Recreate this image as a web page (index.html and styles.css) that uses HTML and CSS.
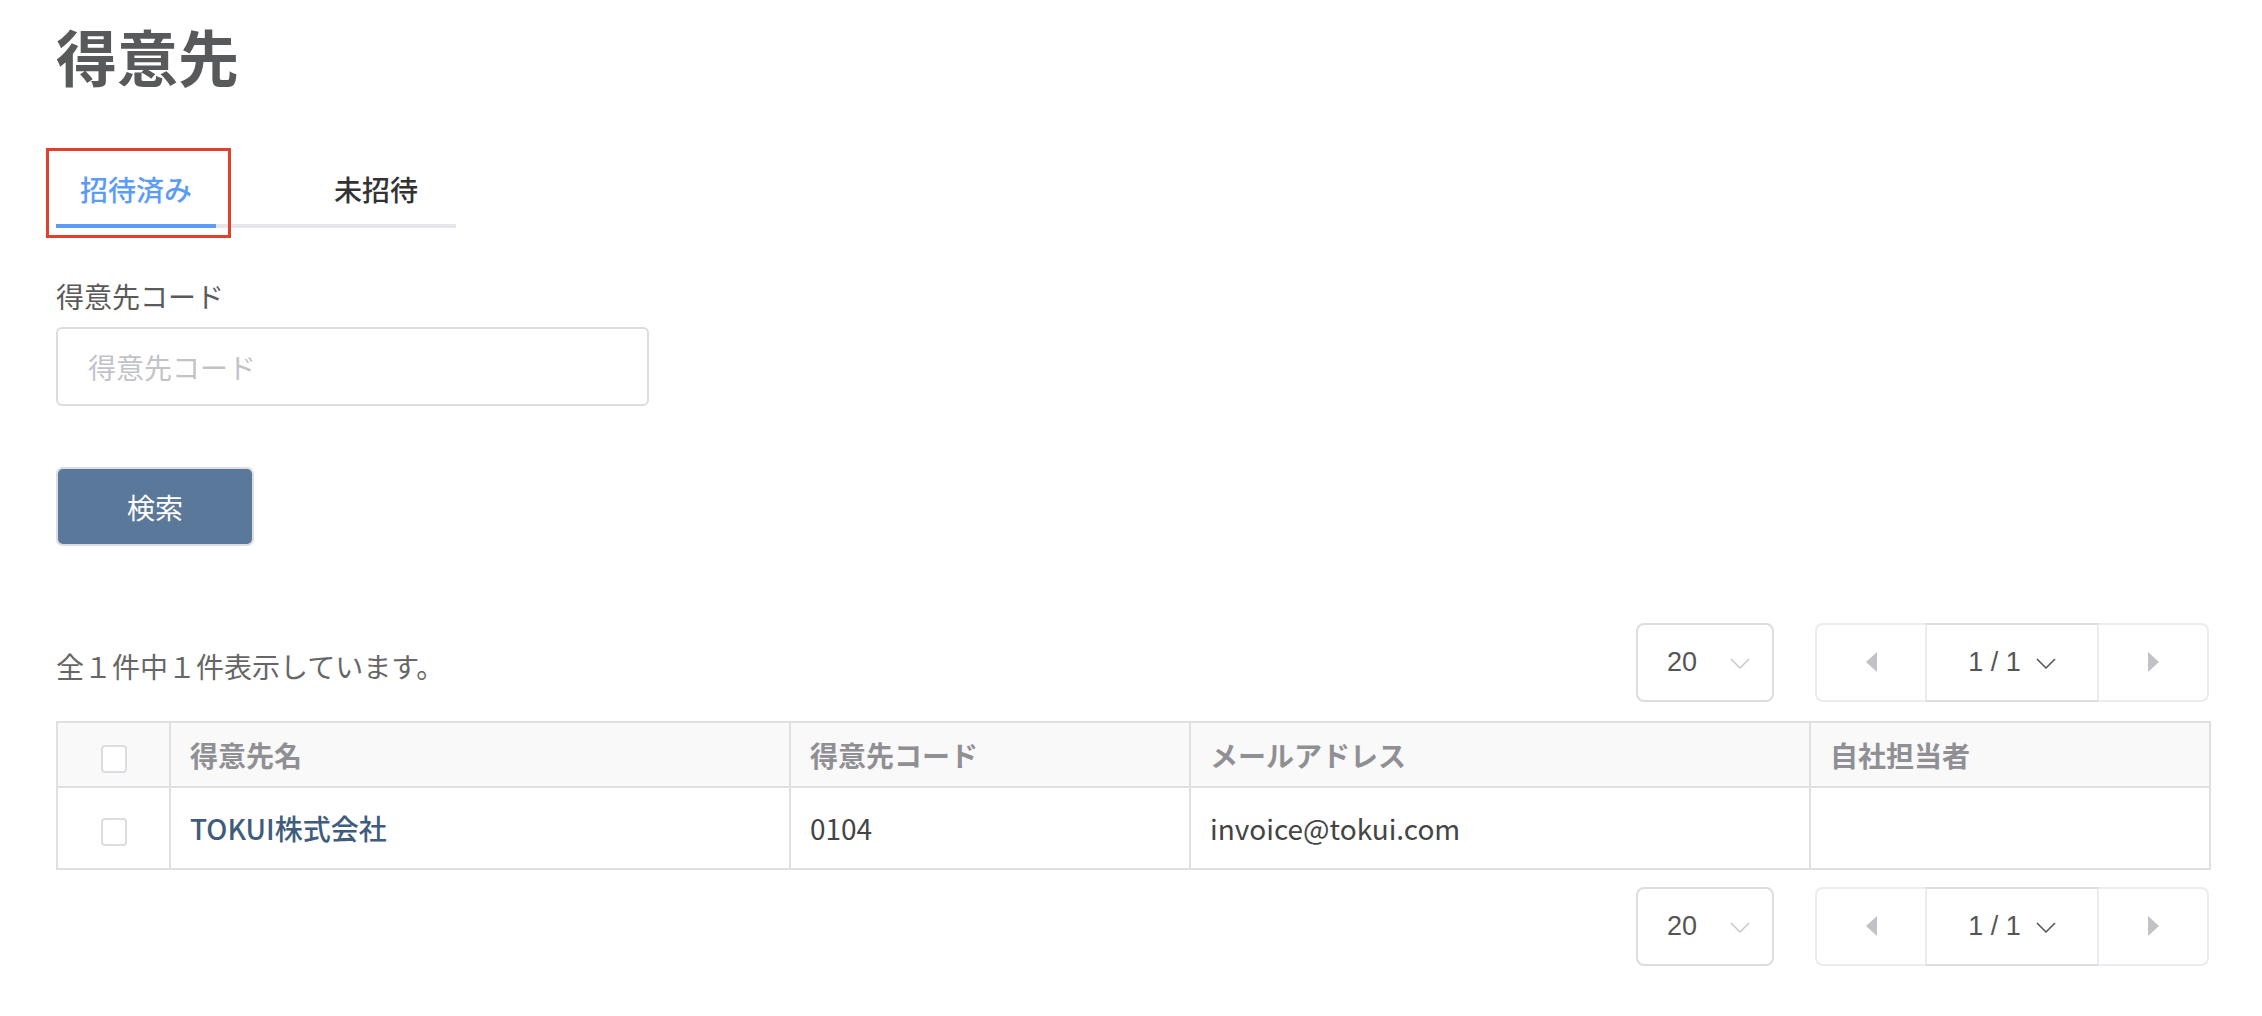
FILE: index.html
```html
<!DOCTYPE html>
<html lang="ja">
<head>
<meta charset="utf-8">
<title>得意先</title>
<link rel="stylesheet" href="styles.css">
</head>
<body>
<div class="page">
  <h1 class="title">得意先</h1>

  <div class="tabs">
    <div class="tab active">招待済み</div>
    <div class="tab">未招待</div>
    <div class="highlight"></div>
  </div>

  <div class="field">
    <label class="label" for="code">得意先コード</label>
    <input class="input" id="code" type="text" placeholder="得意先コード">
  </div>

  <button class="search" type="button">検索</button>

  <div class="toolbar">
    <div class="count">全１件中１件表示しています。</div>
    <div class="paging">
      <div class="select">
        <span class="num">20</span>
        <svg class="chev light" width="20" height="11" viewBox="0 0 20 11"><polyline points="1,1 10,10 19,1" fill="none" stroke="#c8c9cc" stroke-width="1.5"/></svg>
      </div>
      <div class="pager">
        <div class="pbtn"><svg width="11" height="20" viewBox="0 0 11 20"><polygon points="11,0 0,10 11,20" fill="#c0c2c8"/></svg></div>
        <div class="pmid"><span class="num">1 / 1</span><svg class="chev" width="20" height="11" viewBox="0 0 20 11"><polyline points="1,1 10,10 19,1" fill="none" stroke="#555" stroke-width="1.5"/></svg></div>
        <div class="pbtn"><svg width="11" height="20" viewBox="0 0 11 20"><polygon points="0,0 11,10 0,20" fill="#c0c2c8"/></svg></div>
      </div>
    </div>
  </div>

  <table class="grid">
    <colgroup>
      <col class="c-check">
      <col class="c-name">
      <col class="c-code">
      <col class="c-mail">
      <col class="c-staff">
    </colgroup>
    <thead>
      <tr>
        <th class="check"><span class="box"></span></th>
        <th>得意先名</th>
        <th>得意先コード</th>
        <th>メールアドレス</th>
        <th>自社担当者</th>
      </tr>
    </thead>
    <tbody>
      <tr>
        <td class="check"><span class="box"></span></td>
        <td class="name">TOKUI株式会社</td>
        <td>0104</td>
        <td>invoice@tokui.com</td>
        <td></td>
      </tr>
    </tbody>
  </table>

  <div class="toolbar bottom">
    <div class="paging">
      <div class="select">
        <span class="num">20</span>
        <svg class="chev light" width="20" height="11" viewBox="0 0 20 11"><polyline points="1,1 10,10 19,1" fill="none" stroke="#c8c9cc" stroke-width="1.5"/></svg>
      </div>
      <div class="pager">
        <div class="pbtn"><svg width="11" height="20" viewBox="0 0 11 20"><polygon points="11,0 0,10 11,20" fill="#c0c2c8"/></svg></div>
        <div class="pmid"><span class="num">1 / 1</span><svg class="chev" width="20" height="11" viewBox="0 0 20 11"><polyline points="1,1 10,10 19,1" fill="none" stroke="#555" stroke-width="1.5"/></svg></div>
        <div class="pbtn"><svg width="11" height="20" viewBox="0 0 11 20"><polygon points="0,0 11,10 0,20" fill="#c0c2c8"/></svg></div>
      </div>
    </div>
  </div>
</div>
</body>
</html>
```
FILE: styles.css
```css
html, body {
  margin: 0;
  padding: 0;
  background: #ffffff;
}
body {
  font-family: "Noto Sans CJK JP", "Noto Sans", sans-serif;
  color: #444;
}
.page {
  padding: 25px 53px 0 56px;
}
.title {
  margin: 0;
  font-size: 61px;
  line-height: 62px;
  font-weight: 700;
  color: #58595b;
}

/* tabs */
.tabs {
  position: relative;
  margin-top: 63px;
  width: 400px;
  display: flex;
  gap: 80px;
  border-bottom: 4px solid #e5e6eb;
}
.tab {
  width: 160px;
  height: 70px;
  padding-top: 4px;
  line-height: 70px;
  text-align: center;
  font-size: 28px;
  font-weight: 500;
  color: #333;
  border-bottom: 4px solid transparent;
  margin-bottom: -4px;
}
.tab.active {
  color: #5b9cf6;
  border-bottom-color: #5b9cf6;
}
.highlight {
  position: absolute;
  left: -10px;
  top: -2px;
  width: 185px;
  height: 90px;
  box-sizing: border-box;
  border: 3px solid #e2402b;
  pointer-events: none;
}

/* field */
.field {
  margin-top: 49px;
}
.label {
  display: block;
  font-size: 28px;
  line-height: 38px;
  color: #5a5a5a;
}
.input {
  display: block;
  margin-top: 12px;
  width: 593px;
  height: 79px;
  box-sizing: border-box;
  border: 2px solid #dcdde3;
  border-radius: 6px;
  padding: 0 30px;
  font-family: inherit;
  font-size: 28px;
  color: #444;
  outline: none;
}
.input::placeholder {
  color: #c1c3c8;
}
.search {
  display: block;
  margin-top: 61px;
  width: 198px;
  height: 79px;
  box-sizing: border-box;
  background: #5a7899;
  border: 2px solid #dcdde3;
  border-radius: 7px;
  color: #ffffff;
  font-family: inherit;
  font-size: 28px;
  padding: 0;
}

/* toolbar */
.toolbar {
  margin-top: 76px;
  height: 80px;
  display: flex;
  align-items: center;
  justify-content: space-between;
}
.toolbar.bottom {
  margin-top: 16px;
  justify-content: flex-end;
}
.count {
  font-size: 28px;
  color: #666;
  padding-top: 8px;
}
.paging {
  display: flex;
  gap: 41px;
  align-items: center;
}
.num {
  font-family: "Liberation Sans", Arial, sans-serif;
  font-size: 27px;
  color: #555;
}
.select {
  width: 138px;
  height: 79px;
  box-sizing: border-box;
  border: 2px solid #dcdde3;
  border-radius: 8px;
  display: flex;
  align-items: center;
  padding-left: 29px;
  padding-right: 22px;
}
.select .chev {
  margin-left: auto;
  margin-top: 2px;
}
.pager {
  width: 394px;
  height: 79px;
  box-sizing: border-box;
  border: 2px solid #ebecf0;
  border-radius: 8px;
  display: flex;
}
.pbtn {
  width: 108px;
  display: flex;
  align-items: center;
  justify-content: center;
}
.pmid {
  width: 174px;
  box-sizing: border-box;
  margin: -2px 0;
  border: 2px solid #dcdde3;
  border-left-color: #ebecf0;
  border-right-color: #ebecf0;
  display: flex;
  align-items: center;
  justify-content: center;
  gap: 15px;
}
.pmid .chev {
  margin-top: 2px;
}

/* table */
.grid {
  margin-top: 19px;
  width: 2153px;
  table-layout: fixed;
  border-collapse: collapse;
  border: 2px solid #e0e0e0;
}
.c-check { width: 113px; }
.c-name { width: 620px; }
.c-code { width: 400px; }
.c-mail { width: 620px; }
.c-staff { width: 400px; }
.grid th,
.grid td {
  border: 2px solid #e0e0e0;
  text-align: left;
  padding: 0 19px;
  font-size: 28px;
  line-height: 40px;
}
.grid th {
  height: 63px;
  background: #f9f9f9;
  font-weight: 700;
  color: #8f8f94;
}
.grid td {
  height: 80px;
  color: #444;
}
.grid td.name {
  color: #3f5c7d;
  font-weight: 500;
}
.grid .check {
  text-align: center;
  padding: 0;
}
.box {
  display: inline-block;
  vertical-align: middle;
  width: 26px;
  height: 28px;
  box-sizing: border-box;
  border: 2px solid #dcdde3;
  border-radius: 4px;
  background: #fff;
}
```
